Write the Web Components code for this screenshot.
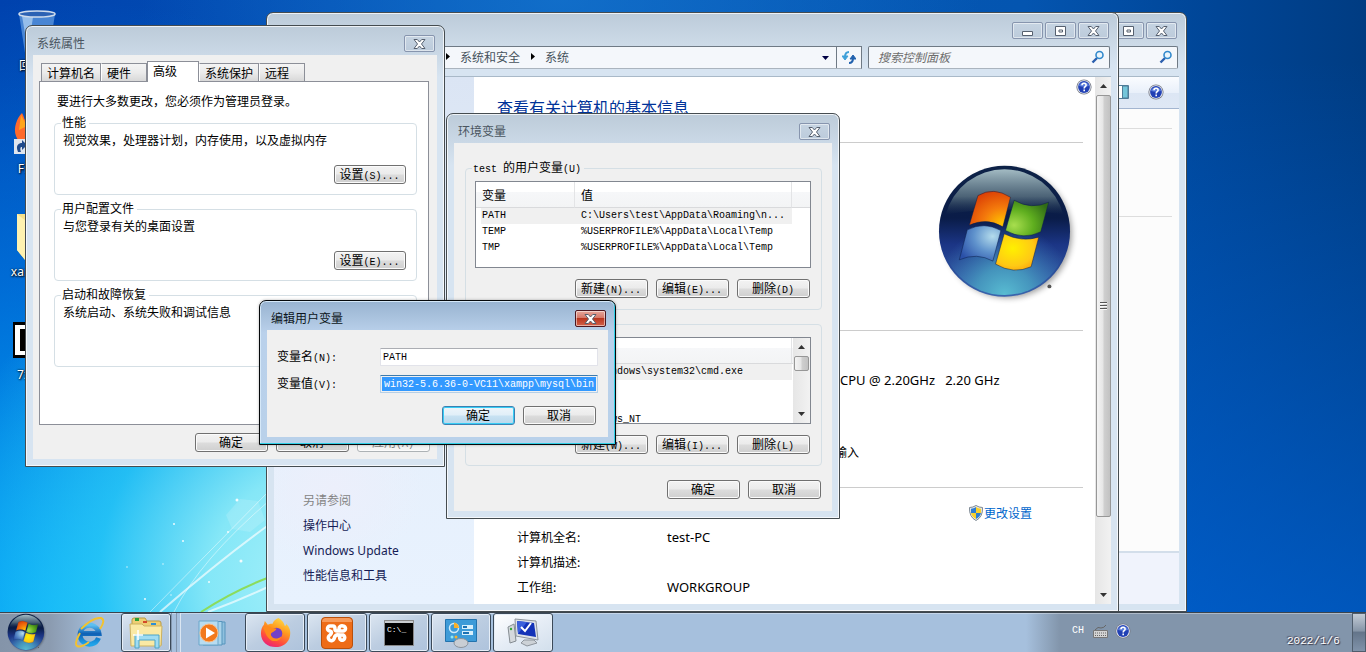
<!DOCTYPE html>
<html lang="zh-CN">
<head>
<meta charset="utf-8">
<title>桌面</title>
<style>
html,body{height:100%;margin:0}
body{font:12px/16px "Noto Sans","Noto Sans CJK SC",sans-serif;color:#000;overflow:hidden}
aero-window.computer{left:334px;top:12px;width:853px;height:600px}
aero-window.system{left:266px;top:12px;width:853px;height:600px}
aero-window.props{left:25px;top:25px;width:420px;height:442px}
aero-window.env{left:446px;top:113px;width:394px;height:406px}
aero-window.edit{left:259px;top:300px;width:357px;height:145px}
</style>
</head>
<body>
<win-desktop>
  <desk-icon slot="icons" kind="bin">回收站</desk-icon>
  <desk-icon slot="icons" kind="firefox">Firefox</desk-icon>
  <desk-icon slot="icons" kind="folder">xampp-w</desk-icon>
  <desk-icon slot="icons" kind="zip">7z1900</desk-icon>
  <aero-window class="computer" controls="min max close"><computer-page></computer-page></aero-window>
  <aero-window class="system" controls="min max close"><system-page></system-page></aero-window>
  <aero-window class="props" caption="系统属性" controls="close"><props-page></props-page></aero-window>
  <aero-window class="env" caption="环境变量" controls="close"><env-page></env-page></aero-window>
  <aero-window class="edit" caption="编辑用户变量" controls="close" active><edit-page></edit-page></aero-window>
  <task-bar slot="bar"></task-bar>
</win-desktop>

<script>
/* Registers an element whose shadow root is filled by render(host). */
function define(name, render) {
  customElements.define(name, class extends HTMLElement {
    connectedCallback() {
      if (this.shadowRoot) return;
      const t = document.createElement('template');
      t.innerHTML = render(this);
      this.attachShadow({mode: 'open'}).append(t.content.cloneNode(true));
    }
  });
}
const UI = '"Noto Sans","Noto Sans CJK SC",sans-serif';
const CJK = '"Noto Sans CJK SC","Noto Sans",sans-serif';
/* Dialog text: full-width characters at 12px, half-width ones on a 6px grid. */
const mix = s => s.replace(/[\x20-\x7e]+/g, m => `<span class="half">${m}</span>`);
const dialogText = `*{box-sizing:border-box}.half{font:10px/16px "Liberation Mono",monospace;white-space:pre}`;

const flag = `
  <path d="M443 583Q490 555 541 588L518 677Q470 648 417 672Z" fill="url(#r)"/>
  <path d="M552 597Q603 627 656 603L632 692Q580 718 526 688Z" fill="url(#g)"/>
  <path d="M411 686Q462 660 512 688L488 780Q440 753 387 776Z" fill="url(#b)"/>
  <path d="M522 698Q575 724 626 708L603 797Q550 821 496 789Z" fill="url(#y)"/>`;
const orb = size => `<svg width="${size}" height="${size}" viewBox="320 485 430 430" aria-hidden="true">
  <defs>
    <radialGradient id="r" cx=".8" cy=".9" r="1"><stop offset="0" stop-color="#ffc400"/><stop offset=".45" stop-color="#f47a0c"/><stop offset="1" stop-color="#d93a05"/></radialGradient>
    <radialGradient id="g" cx=".2" cy=".7" r=".9"><stop offset="0" stop-color="#a8de4e"/><stop offset=".5" stop-color="#5fae1f"/><stop offset="1" stop-color="#2f6a16"/></radialGradient>
    <radialGradient id="b" cx=".8" cy=".3" r=".9"><stop offset="0" stop-color="#b4dcec"/><stop offset=".5" stop-color="#5f92cc"/><stop offset="1" stop-color="#2a50a8"/></radialGradient>
    <radialGradient id="y" cx=".4" cy=".4" r=".8"><stop offset="0" stop-color="#fff000"/><stop offset=".6" stop-color="#ffc915"/><stop offset="1" stop-color="#fb8d05"/></radialGradient>
    <linearGradient id="o" x2="0" y2="1"><stop offset="0" stop-color="#0d2247"/><stop offset=".4" stop-color="#0a1c48"/><stop offset=".6" stop-color="#1b3585"/><stop offset="1" stop-color="#3a66ae"/></linearGradient>
    <radialGradient id="c" cx=".5" cy="1" r=".55"><stop offset="0" stop-color="#59bdd2"/><stop offset=".4" stop-color="#4aa4c4" stop-opacity=".8"/><stop offset="1" stop-color="#3f7fc0" stop-opacity="0"/></radialGradient>
    <linearGradient id="s" x2="0" y2="1"><stop offset="0" stop-color="#a4bcc4"/><stop offset=".6" stop-color="#5d7583" stop-opacity=".8"/><stop offset="1" stop-color="#33495c" stop-opacity="0"/></linearGradient>
    <filter id="f" x="-20%" y="-20%" width="140%" height="140%"><feGaussianBlur stdDeviation="9"/></filter>
  </defs>
  <circle cx="533" cy="698" r="192" fill="#000" opacity=".4" filter="url(#f)"/>
  <circle cx="523" cy="690" r="197" fill="url(#o)"/>
  <circle cx="523" cy="690" r="192" fill="url(#c)"/>
  <path d="M346 640A183 183 0 0 1 700 640Q523 610 346 640Z" fill="url(#s)"/>
  <g stroke="#0a1c48" stroke-width="3" stroke-opacity=".5">${flag}</g>
  <circle cx="658" cy="856" r="6" fill="#555"/>
</svg>`;
const help = size => `<svg width="${size}" height="${size}" viewBox="0 0 16 16" aria-hidden="true"><circle cx="8" cy="8" r="7.6" fill="#777b86"/><circle cx="8" cy="8" r="6.8" fill="#e4e8f2"/><circle cx="8" cy="8" r="5.9" fill="#2140b4"/><path d="M3 7a5.2 5.2 0 0 1 10 0Q8 8.500 3 7Z" fill="#5c7fdd"/><path d="M6 6.300C6 3.500 10.200 3.600 10.100 6.200 10 7.700 8.200 7.700 8.200 9.400M8.200 10.600V12.200" fill="none" stroke="#fff" stroke-width="1.600"/></svg>`;

define('win-desktop', () => `<style>
  :host{display:grid;grid-template-rows:minmax(0,1fr) 40px;height:100vh}
  .surface{position:relative;overflow:hidden;background:
    radial-gradient(ellipse 400px 380px at 330px 580px,rgba(172,242,250,1) 0%,rgba(140,236,248,.95) 30%,rgba(50,210,248,.7) 58%,rgba(0,170,248,0) 100%),
    radial-gradient(ellipse 640px 620px at 60px 620px,rgba(0,168,248,1),rgba(0,130,232,.6) 55%,rgba(0,100,215,0) 100%),
    radial-gradient(ellipse 420px 200px at 560px 0,rgba(20,115,205,.8),rgba(10,90,190,0)),
    linear-gradient(180deg,transparent 0 10%,rgba(0,104,225,.6)),
    linear-gradient(90deg,#0042ae 0%,#0558b8 40%,#0455b0 75%,#004698 88%,#003c82 100%)}
  .rays{position:absolute;left:0;bottom:0}
  .icons{position:absolute;left:0;top:4px;display:grid;grid-auto-rows:103px}
</style>
<div class="surface">
  <svg class="rays" width="280" height="152" viewBox="0 460 280 152" fill="none" aria-hidden="true">
    <path d="M150 612L270 490M174 612Q200 560 270 500" stroke="#fff" opacity=".45"/>
    <path d="M160 612Q220 560 270 524M208 612Q240 600 270 586" stroke="#fff" stroke-width="2" opacity=".65"/>
    <path d="M201 612Q235 590 270 577" stroke="#8bdc5c" stroke-width="2"/>
    <path d="M226 515L240 499 258 501 265 520 250 532 232 529Z" fill="#fff" opacity=".15"/>
    <g fill="#fff" opacity=".9"><circle cx="237" cy="500" r="1.500"/><circle cx="241" cy="561" r="1.500"/><circle cx="228" cy="532" r="1"/><circle cx="163" cy="564" r=".7"/><circle cx="183" cy="541" r="1"/><circle cx="174" cy="524" r="1"/><circle cx="145" cy="599" r="1"/><circle cx="209" cy="582" r="1"/><circle cx="171" cy="595" r=".7"/><circle cx="127" cy="567" r=".7"/></g>
  </svg>
  <div class="icons"><slot name="icons"></slot></div>
  <slot></slot>
</div>
<slot name="bar"></slot>`);

const deskArt = {
  bin: `<svg width="40" height="48" viewBox="0 0 40 48" aria-hidden="true"><path d="M2 7L8 46H32L38 7Z" fill="#5a95dc" opacity=".8"/><path d="M5 9L11 44 16 10Z" fill="#b8d6f4" opacity=".7"/><ellipse cx="20" cy="7" rx="18" ry="3" fill="#2c62b4" stroke="#cfdcec" stroke-width="1.500"/></svg>`,
  firefox: `<svg width="48" height="48" viewBox="0 0 48 48" aria-hidden="true"><path d="M9 3C11 6 11 9 12 10 24 0 44 8 44 26 44 42 10 46 3 26 0 18 4 8 9 3Z" fill="#ff6a2c"/><path d="M8 5L14 16 6 20Z" fill="#ffa51c"/><path d="M1 29H14V44H1Z" fill="#dfe5ee"/><path d="M5 42C2 35 6 33 9 33V30L14 35 9 40V37C7 37 7 39 8 42Z" fill="#1f4a8c"/></svg>`,
  folder: `<svg width="48" height="50" viewBox="0 0 48 50" aria-hidden="true"><path d="M4 2H30V38L12 48 4 38Z" fill="#f6e08a"/><path d="M4 2L13 9V49L4 38Z" fill="#fff2b0"/></svg>`,
  zip: `<svg width="48" height="40" viewBox="0 0 48 40" aria-hidden="true"><path d="M0 2H48V38H0Z" fill="#000"/><path d="M2 5H45V35H2Z" fill="#fff"/><path d="M7 9H40V31H7Z" fill="#000"/></svg>`
};
define('desk-icon', h => `<style>
  :host{display:flex;flex-direction:column;align-items:center;width:74px;height:103px;color:#fff;font:12px/18px ${UI};text-shadow:1px 1px 2px #000,0 0 2px #000}
  .art{height:53px;display:grid;place-items:center}
  .name{white-space:nowrap}
</style><div class="art">${deskArt[h.getAttribute('kind')]}</div><div class="name"><slot></slot></div>`);

const glyph = {
  min: '<path d="M3.500 7.500H13.500V11.500H3.500Z"/>',
  max: '<path d="M3.500 2.500H13.500V11.500H3.500Z"/><path d="M7 6H10.500V8H7Z"/>',
  close: '<path d="M3 2.500H6.300L8.500 5 10.700 2.500H14L10.500 7 14 11.500H10.700L8.500 9 6.300 11.500H3L6.500 7Z"/>'
};
const label = {min: '最小化', max: '最大化', close: '关闭'};
define('aero-window', h => `<style>
  :host{position:absolute;box-sizing:border-box;display:flex;flex-direction:column;border:1px solid #454c50;border-radius:7px 7px 0 0;padding:0 7px 7px;background:linear-gradient(#bccbd9,#d7e4f1 52px);box-shadow:inset 0 0 0 1px rgba(255,255,255,.75)}
  :host([active]){border-color:#05080a;background:linear-gradient(#98b3d0,#bad1eb 32px,#b9d1ea 100%);box-shadow:inset -1px -1px 0 #2fd0e6,inset 0 0 0 1px #d5e8f8,0 0 3px rgba(0,0,0,.3)}
  .title{flex:none;display:flex;align-items:flex-start;justify-content:space-between;height:29px;padding:9px 2px 0 4px;box-sizing:border-box;color:#4a5560;font:12px/16px ${CJK}}
  :host([active]) .title{color:#0c1520}
  :host(:not([caption])) .title{height:33px}
  .controls{display:flex;gap:2px}
  button{width:31px;height:17px;padding:0;display:grid;place-items:center;border:1px solid #8795ae;border-radius:2px;background:linear-gradient(#c6d4e2,#bccbdb);box-shadow:inset 0 0 0 1px rgba(255,255,255,.5)}
  svg{fill:#fff;stroke:#56606f}
  :host([active]) button{border-color:#4c1720;background:linear-gradient(#e6a79b,#d47566 48%,#b9361f 50%,#d3614a)}
  ::slotted(*){flex:1;min-height:0}
</style>
<div class="title"><span>${h.getAttribute('caption') || ''}</span><div class="controls">${h.getAttribute('controls').split(' ').map(c =>
  `<button aria-label="${label[c]}"><svg width="17" height="14" viewBox="0 0 17 14">${glyph[c]}</svg></button>`).join('')}</div></div>
<slot></slot>`);

define('win-button', h => `<style>${dialogText}
  :host{display:block;width:73px;flex:none}
  button{display:block;width:100%;height:19px;padding:0 1px 2px 0;border:1px solid #707070;border-radius:3px;background:linear-gradient(#f3f3f3,#ebebeb 48%,#dcdcdc 52%,#cfcfcf);box-shadow:inset 0 0 0 1px #fbfbfb;font:12px/15px ${CJK};color:#000;white-space:nowrap}
  .half{line-height:15px}
  :host([default]) button{border-color:#3c7fb1;background:linear-gradient(#eef5fa,#e0eff8 48%,#c8e2f2 52%,#b8d8ec);box-shadow:inset 0 0 0 1px #37cdf5}
  button:disabled{border-color:#adb2b5;background:#f4f4f4;color:#838383}
</style><button ${h.hasAttribute('disabled') ? 'disabled' : ''}>${mix(h.getAttribute('label'))}</button>`);

define('group-box', h => `<style>${dialogText}
  :host{display:block}
  fieldset{height:100%;margin:0;padding:0 10px 0 9px;min-width:0;border:1px solid #d5dfe5;border-radius:4px;font:12px/16px ${CJK}}
  legend{padding:0 3px 0 1px;margin-left:-3px;height:16px;line-height:14px}
  legend .half{line-height:14px}
</style><fieldset><legend>${mix(h.getAttribute('legend') || '')}</legend><slot></slot></fieldset>`);

define('props-page', () => `<style>${dialogText}
  :host{display:block;background:#f0f0f0;padding:6px 8px 0 6px;font:12px/16px ${CJK}}
  .tabs{display:flex;align-items:flex-end;height:20px;padding-left:2px}
  .tabs button{height:18px;padding:0;padding-left:5px;border:1px solid #8c8f98;border-width:1px 1px 0;border-left-color:#fff;text-align:left;white-space:nowrap;background:linear-gradient(#f4f4f4,#ebebeb 50%,#d8d8d8);font:12px/16px ${CJK};color:#000}
  .tabs button:first-child{border-left-color:#8c8f98}
  .w46{width:46px}.w60{width:60px}.w52{width:52px}
  .tabs button[aria-selected=true]{position:relative;height:21px;margin-bottom:-1px;padding-bottom:3px;background:#fff;border-left-color:#8c8f98}
  .panel{height:344px;border:1px solid #8c8f98;background:#fff;padding:11px 11px 0 14px}
  p{margin:0}
  .lead{padding-left:3px}
  group-box{height:80px;margin-top:6px}
  .desc{padding-top:1px;margin-left:-1px}
  group-box win-button{width:72px;margin:17px 0 0 auto}
  .foot{display:flex;justify-content:flex-end;gap:8px;padding-top:8px;margin-right:-1px}
</style>
<div class="tabs" role="tablist">
  <button class="w60" role="tab">计算机名</button><button class="w46" role="tab">硬件</button><button class="w52" role="tab" aria-selected="true">高级</button><button class="w60" role="tab">系统保护</button><button class="w46" role="tab">远程</button>
</div>
<div class="panel" role="tabpanel">
  <p class="lead">要进行大多数更改，您必须作为管理员登录。</p>
  <group-box legend="性能"><p class="desc">视觉效果，处理器计划，内存使用，以及虚拟内存</p><win-button label="设置(S)..."></win-button></group-box>
  <group-box legend="用户配置文件"><p class="desc">与您登录有关的桌面设置</p><win-button label="设置(E)..."></win-button></group-box>
  <group-box legend="启动和故障恢复"><p class="desc">系统启动、系统失败和调试信息</p></group-box>
</div>
<div class="foot"><win-button label="确定"></win-button><win-button label="取消"></win-button><win-button disabled label="应用(A)"></win-button></div>`);

define('scroll-bar', () => `<style>
  :host{display:flex;flex-direction:column;align-items:center;width:17px;box-sizing:border-box;background:linear-gradient(90deg,#e6e6e6,#f2f2f2)}
  .end{flex:none;height:18px;display:grid;place-items:center}
  .thumb{flex:none;width:15px;height:var(--thumb,15px);box-sizing:border-box;border:1px solid #979797;border-radius:2px;background:linear-gradient(90deg,#f4f4f4,#e6e6e6 45%,#cfcfcf 55%,#c2c2c2);display:grid;place-items:center}
  .grip{display:var(--grip,none);width:7px;height:9px;background:repeating-linear-gradient(#555 0 1px,#f8f8f8 1px 2px,transparent 2px 3px)}
  .space{flex:1}
</style>
<div class="end"><svg width="7" height="4"><path d="M0 4L3.500 0 7 4Z" fill="#333"/></svg></div>
<div class="thumb"><div class="grip"></div></div><div class="space"></div>
<div class="end"><svg width="7" height="4"><path d="M0 0L3.500 4 7 0Z" fill="#333"/></svg></div>`);

define('variable-list', h => `<style>${dialogText}
  :host{display:flex;height:87px;margin:5px 0 11px;border:1px solid #828790;background:#fff;overflow:hidden;box-sizing:border-box}
  .view{flex:1;overflow:hidden}
  table{width:100%;table-layout:fixed;border-collapse:separate;border-spacing:0}
  col.name{width:99px}col.value{width:217px}
  th{height:26px;padding:0 0 0 6px;text-align:left;font:12px/16px ${CJK};background:linear-gradient(#fff 40%,#f6f7f9 40%,#f3f4f5);border-bottom:1px solid #d9dadc;border-right:1px solid #e3e4e6}
  th:last-child{border-right:0}
  td{height:16px;padding:0 0 0 6px;white-space:nowrap;background-clip:padding-box}
  td:first-child{border-left:5px solid transparent;padding-left:1px}
  tr.on td:not(:last-child){background-color:#f0f0f0}
  .half{line-height:16px;display:block}
</style>
<div class="view"><table><colgroup><col class="name"><col class="value"><col></colgroup>
<thead><tr>${h.getAttribute('heads').split('|').map(t => `<th>${t}</th>`).join('')}</tr></thead>
<tbody>${h.getAttribute('rows').split('|').map((r, i) => {
  const [a, b] = r.split('=');
  return `<tr${i ? '' : ' class="on"'}><td>${mix(a)}</td><td>${mix(b)}</td><td></td></tr>`;
}).join('')}</tbody></table></div>${h.hasAttribute('scroll') ? '<scroll-bar></scroll-bar>' : ''}`);

define('env-page', () => `<style>${dialogText}
  :host{display:block;background:#f0f0f0;padding:17px 10px 0 11px}
  group-box{height:150px;margin-bottom:6px}
  .row{display:flex;justify-content:flex-end;gap:8px;padding-right:1px}
  .foot{padding-top:8px}
</style>
<group-box legend="test 的用户变量(U)">
  <variable-list heads="变量|值|" rows="PATH=C:\\Users\\test\\AppData\\Roaming\\n...|TEMP=%USERPROFILE%\\AppData\\Local\\Temp|TMP=%USERPROFILE%\\AppData\\Local\\Temp"></variable-list>
  <div class="row"><win-button label="新建(N)..."></win-button><win-button label="编辑(E)..."></win-button><win-button label="删除(D)"></win-button></div>
</group-box>
<group-box>
  <variable-list scroll heads="||" rows="=C:\\Windows\\system32\\cmd.exe|=|=|=Windows_NT"></variable-list>
  <div class="row"><win-button label="新建(W)..."></win-button><win-button label="编辑(I)..."></win-button><win-button label="删除(L)"></win-button></div>
</group-box>
<div class="row foot"><win-button label="确定"></win-button><win-button label="取消"></win-button></div>`);

define('text-field', h => `<style>${dialogText}
  :host{display:flex;height:18px;align-items:center;font:12px/16px ${CJK}}
  label{width:103px;flex:none}
  input{flex:1;min-width:0;height:18px;padding:1px 1px 1px 2px;border:1px solid #e2e3ea;border-top-color:#abadb3;border-radius:1px;background:#fff;font:10px/14px "Liberation Mono",monospace;color:#000;outline:0}
  :host([selected]) input{border-color:#b5cfe7;border-top-color:#3d7bad;background:#fff linear-gradient(#39f,#39f) content-box;color:#fff;padding-left:1px;text-indent:2px}
</style><label for="f">${mix(h.getAttribute('label'))}</label><input id="f" type="text" value="${h.getAttribute('value')}">`);

define('edit-page', () => `<style>
  :host{display:flex;flex-direction:column;gap:9px;background:#f0f0f0;padding:18px 10px 0}
  .row{display:flex;justify-content:flex-end;gap:8px;padding:4px 2px 0 0}
</style>
<text-field label="变量名(N):" value="PATH"></text-field>
<text-field selected label="变量值(V):" value="win32-5.6.36-0-VC11\\xampp\\mysql\\bin"></text-field>
<div class="row"><win-button default label="确定"></win-button><win-button label="取消"></win-button></div>`);

define('search-box', h => `<style>
  :host{display:flex;align-items:center;box-sizing:border-box;height:23px;border:1px solid #6f7a85;border-bottom-color:#aab4be;border-radius:2px;background:#f4f7fb;padding:0 4px 1px 9px}
  input{flex:1;min-width:0;border:0;padding:0;background:none;font:italic 12px/16px ${CJK};outline:0}
  input::placeholder{color:#6d6d6d}
</style><input type="search" aria-label="搜索" placeholder="${h.getAttribute('hint') || ''}">
<svg width="14" height="14" viewBox="0 0 14 14" fill="none" aria-hidden="true"><path d="M1.500 12.500L6 8" stroke="#2b5fae" stroke-width="2.400"/><circle cx="8.500" cy="5" r="3.500" stroke="#3289cc" stroke-width="1.600" fill="#eaf5fc"/></svg>`);

define('computer-page', () => `<style>
  *{box-sizing:border-box}
  :host{display:flex;flex-direction:column}
  search-box{width:242px;margin:0 1px 7px auto}
  .bar{height:33px;border-top:1px solid #a9b9c8;border-bottom:1px solid #a3b5d0;background:linear-gradient(#fafcff,#e9f0fa 50%,#dce6f4 52%,#dfe8f5);display:flex;justify-content:flex-end;align-items:center;gap:19px;padding:0 15px 2px 0}
  .body{flex:1;background:#fcfcfc;padding:19px 7px 0 200px}
  hr{margin:0 0 87px;border:0;border-top:1px solid #ddd}
  .status{height:53px;background:#f0f3fc;border-top:2px solid #d3deea}
</style>
<search-box></search-box>
<div class="bar"><svg width="17" height="14" aria-hidden="true"><path d="M1 .500H16.500V13.500H1Z" fill="#fff" stroke="#4f7d98"/><path d="M10.500 1H16V13H10.500Z" fill="#74c6da" stroke="#4f7d98"/></svg>${help(16)}</div>
<div class="body"><hr><hr></div><div class="status"></div>`);

define('system-page', () => `<style>
  *{box-sizing:border-box}
  :host{display:flex;flex-direction:column;color:#000;font:12px/16px ${UI}}
  .nav{display:flex;gap:6px;height:30px;padding-right:1px}
  .address{flex:1;display:flex;align-items:center;height:23px;margin-left:60px;border:1px solid #6f7a85;border-bottom-color:#aab4be;background:#f4f7fb;color:#46525c;font:12px/16px ${CJK}}
  .crumb{display:flex;align-items:center;gap:10px;padding-bottom:2px}
  .crumb:first-child{margin-left:111px}
  .crumb+.crumb{margin-left:11px}
  .drop{margin:0 7px 0 auto}
  .refresh{width:25px;height:21px;padding:0;border:0;border-left:1px solid #6f7a85;background:none;display:grid;place-items:center}
  search-box{width:242px}
  .content{flex:1;min-height:0;display:flex;border-top:1px solid #a9b9c8;background:#fff}
  aside{width:200px;background:radial-gradient(ellipse 90px 80px at 30% 78%,#eceffb,transparent),linear-gradient(#dbe5f4,#e6effb 60%,#e8f2fe);padding:415px 0 0 29px;font-size:12px;line-height:18px}
  aside span,aside a{display:block;margin-bottom:7px;color:#151c55;text-decoration:none}
  aside span{color:#848484}
  main{flex:1;padding:17px 12px 0 23px;overflow:hidden}
  .top{display:flex;justify-content:space-between;align-items:flex-start}
  .top svg{margin:-15px -9px 0 0}
  h1{margin:0;font:16px/26px ${CJK};color:#039}
  hr{margin:8px 0;border:0;border-top:1px solid #ccc;height:2px}
  .intro{margin-top:22px}
  .edition{height:170px;padding:11px 3px 0 0;display:flex;justify-content:flex-end}
  dl{margin:0;padding-left:20px;display:grid;grid-template-columns:150px 1fr;line-height:24px}
  dt{font:12px/23px ${CJK}}
  dd{margin:0;font-size:13px;white-space:nowrap}
  .spec{height:139px;padding:28px 0 0 20px;grid-auto-rows:24px}
  .cpu{padding-left:173px}
  .touch{grid-column:2;grid-row:4;padding-left:168px;font:12px/24px ${CJK}}
  .cpu{grid-column:2;grid-row:1}
  .names{padding-top:3px;grid-auto-rows:25px;line-height:25px}
  .names dd{grid-column:2}
  .names .link{display:flex;padding-left:302px}
  a.change{display:flex;align-items:center;gap:1px;color:#0066cc;text-decoration:none;font:12px/24px ${CJK}}
  scroll-bar{width:16px;--thumb:422px;--grip:block}
</style>
<div class="nav">
  <div class="address"><span class="crumb"><svg width="4" height="7"><path d="M0 0L4 3.500 0 7Z"/></svg>系统和安全</span><span class="crumb"><svg width="4" height="7"><path d="M0 0L4 3.500 0 7Z"/></svg>系统</span>
    <svg class="drop" width="7" height="4"><path d="M0 0H7L3.500 4Z" fill="#004"/></svg>
    <button class="refresh" aria-label="刷新"><svg width="14" height="13" viewBox="0 0 14 13" fill="none" stroke-width="2"><path d="M7 1Q3 1 3 6" stroke="#3fa0d8"/><path d="M0 5H6L3 9Z" fill="#3fa0d8" stroke="#3fa0d8" stroke-width="1"/><path d="M7 12Q11 12 11 7" stroke="#2262ae"/><path d="M8 8H14L11 4Z" fill="#2262ae" stroke="#2262ae" stroke-width="1"/></svg></button></div>
  <search-box hint="搜索控制面板"></search-box>
</div>
<div class="content">
  <aside><span>另请参阅</span><a href="#">操作中心</a><a href="#">Windows Update</a><a href="#">性能信息和工具</a></aside>
  <main>
    <div class="top"><h1>查看有关计算机的基本信息</h1>${help(16)}</div>
    <hr class="intro">
    <div class="edition">${orb(143)}</div>
    <hr>
    <dl class="spec"><dd class="cpu">CPU @ 2.20GHz &nbsp; 2.20 GHz</dd><dd class="touch">输入</dd></dl>
    <hr>
    <dl class="names"><dd class="link"><a class="change" href="#"><svg width="14" height="16" viewBox="0 0 14 16" aria-hidden="true"><path d="M7 .500Q10 2.500 13.500 2.500 14 12 7 15.500 0 12 .500 2.500 4 2.500 7 .500Z" fill="#eee" stroke="#7b8792"/><path d="M7 2Q4.500 3.700 2 3.800V8H7Z" fill="#2d7dd2"/><path d="M7 2Q9.500 3.700 12 3.800V8H7Z" fill="#f7d02c"/><path d="M2 8H7V14Q2.500 11.500 2 8Z" fill="#f7d02c"/><path d="M7 8H12Q11.500 11.500 7 14Z" fill="#2d7dd2"/></svg>更改设置</a></dd>
    <dt>计算机全名:</dt><dd>test-PC</dd><dt>计算机描述:</dt><dd></dd><dt>工作组:</dt><dd>WORKGROUP</dd></dl>
  </main>
  <scroll-bar></scroll-bar>
</div>`);

const art = {
  ie: `<svg width="32" height="32" viewBox="0 0 32 32" fill="none" aria-hidden="true"><defs><linearGradient id="i" x2="0" y2="1"><stop offset="0" stop-color="#5cc0f2"/><stop offset=".45" stop-color="#0f5fb4"/><stop offset="1" stop-color="#1fa4ea"/></linearGradient></defs><path d="M25.500 21A9.500 9.500 0 1 1 26 16.500H8" stroke="url(#i)" stroke-width="5"/><path d="M7 16Q1 27 4 29 8 31 16 25M8 12Q20 0 28 1 33 3 27 12" stroke="#f2c230" stroke-width="2"/></svg>`,
  explorer: `<svg width="34" height="32" viewBox="0 0 34 32" aria-hidden="true"><path d="M3 3Q3 1 5 1H16L18 4H30Q32 4 32 6V28H3Z" fill="#eecf74" stroke="#b99a45"/><path d="M6 1H10V4H6Z" fill="#2b9f35"/><path d="M14 4H18V6H14Z" fill="#d34a28"/><path d="M22 6H27V8H22Z" fill="#2b8ed6"/><path d="M1 7H13L15 9H33L32 29H2Z" fill="#fae9a4" stroke="#cdb260"/><path d="M6 18H30V31H26V23H10V31H6Z" fill="#9fdcf2" stroke="#4ca4c8"/><path d="M9 13V23M4 18H14" stroke="#fff" stroke-width="1.500"/></svg>`,
  wmp: `<svg width="30" height="26" viewBox="0 0 30 26" aria-hidden="true"><path d="M8 2H27V24H8Z" fill="#8fc0de" stroke="#5795bd"/><path d="M5 1.500H24V25H5Z" fill="#a9d3ea" stroke="#5795bd"/><path d="M1 1H20V25H1Z" fill="#b8dcf0" stroke="#6ba7ca"/><circle cx="11" cy="13" r="9" fill="#f2791c" stroke="#fbc08a"/><path d="M8 7.500L17 13 8 18.500Z" fill="#fff"/></svg>`,
  firefox: `<svg width="31" height="31" viewBox="0 0 32 32" aria-hidden="true">
  <defs><linearGradient id="fx" x1=".8" x2=".3" y2="1"><stop offset="0" stop-color="#ffe14a"/><stop offset=".4" stop-color="#ff9a1f"/><stop offset=".75" stop-color="#ff4a3f"/><stop offset="1" stop-color="#e8207c"/></linearGradient></defs>
  <path d="M19 1C24 4 25 7 25.500 9 27 9.500 27 8 27 7 30 10 32 14 31 19 30 27 23 31 16 31 8 31 1 26 1 17 1 13 2 10 4 8L5 4 8 8C10 7 12 7 13 7 14 4 16 2 19 1Z" fill="url(#fx)"/>
  <circle cx="17" cy="17" r="6" fill="#7540c8"/><path d="M3 11C5 9 9 9 12 11L17 12C16 15 12 15 11 18 12 22 17 24 22 20 21 25 13 27 9 22 6 19 5 14 3 11Z" fill="#ff8a1c"/></svg>`,
  xampp: `<svg width="32" height="32" viewBox="0 0 32 32" aria-hidden="true"><path d="M4 .500H28Q31.500 .500 31.500 4V28Q31.500 31.500 28 31.500H4Q.500 31.500 .500 28V4Q.500 .500 4 .500Z" fill="#ee6c18" stroke="#b9500c"/><path d="M4 1H28Q31 2 31 5H1Q1 2 4 1Z" fill="#f79a5a"/><path d="M9 9H12Q14 9 14 12 14 14 16 14H19M9 9A2.500 2.500 0 0 0 9 14Q12 15 9 18A3 3 0 1 0 13 22Q14 17 18 18M22 9A3 3 0 0 0 18 12V14H22A2.500 2.500 0 0 0 22 9M19 18H22A2.500 2.500 0 1 1 20 23Q18 22 19 18" fill="none" stroke="#fff" stroke-width="3.600" stroke-linecap="round" stroke-linejoin="round"/></svg>`,
  cmd: `<svg width="30" height="26" viewBox="0 0 30 26" aria-hidden="true"><path d="M.500 .500H29.500V25.500H.500Z" fill="#000" stroke="#888"/><path d="M1 1H29V3H1Z" fill="#c8ccd0"/><text x="3" y="12" fill="#fff" font-family="Liberation Mono,monospace" font-size="8">C:\\_</text></svg>`,
  panel: `<svg width="32" height="30" viewBox="0 0 32 30" aria-hidden="true"><path d="M.500 1.500H31.500V23.500H.500Z" fill="#3d9bd8" stroke="#2373ad"/><circle cx="9" cy="10" r="4.500" fill="none" stroke="#cfeafa" stroke-width="1.500"/><path d="M9 10V4.500A5.500 5.500 0 0 1 14 10Z" fill="#f8b02c"/><path d="M17 7H28V11H17ZM17 13H28V17H17Z" fill="#d8f0fc"/><path d="M18 8H22V10H18ZM18 14H24V16H18Z" fill="#1b72b4"/><circle cx="7" cy="19" r="1.500" fill="#8de8f8"/><circle cx="11" cy="19" r="1.500" fill="#f8b02c"/><ellipse cx="16" cy="25" rx="7" ry="4.500" fill="#c9ced4" stroke="#8c949c"/></svg>`,
  system: `<svg width="32" height="30" viewBox="0 0 32 30" aria-hidden="true"><path d="M1 9L7 6 9 23 3 25Z" fill="#d5d9dd" stroke="#858c92"/><circle cx="4" cy="11" r="1.200" fill="#3a3"/><path d="M8 1L29 3 31 22 9 18Z" fill="#dfe3e8" stroke="#8d949c"/><path d="M10 3L27 5 29 19 11 16Z" fill="#1433b8"/><path d="M10 3L20 4 11 16Z" fill="#3b60dc"/><path d="M14 9L18 13 24 5" fill="none" stroke="#fff" stroke-width="2"/><path d="M17 22L27 22 30 25 20 28 14 25Z" fill="#cdd2d7" stroke="#8d949c"/></svg>`
};
define('task-button', h => `<style>
  :host{display:block;width:60px;height:39px}
  button{width:100%;height:100%;padding:0;border:1px solid transparent;background:none;display:grid;place-items:center}
  :host([running]) button{border-color:#3b4958;border-radius:3px;box-shadow:inset 0 0 0 1px #e6eef7;background:linear-gradient(150deg,#dce6f1,#bccde1 50%,#aec3dc)}
  :host([front]) button{background:linear-gradient(150deg,#fff,#e6edf6 50%,#d2dfec)}
</style><button aria-label="${h.getAttribute('name')}">${art[h.getAttribute('kind')]}</button>`);

define('task-bar', () => `<style>
  *{box-sizing:border-box}
  :host{box-sizing:border-box;position:relative;display:flex;height:40px;border-top:1px solid #3b444d;background:linear-gradient(rgba(255,255,255,.35) 0 1px,transparent 1px),linear-gradient(90deg,#8494a9 0,#8b9bb0 50px,#a6c0dd 100px,#a6c0dd calc(100% - 340px),#8295ab calc(100% - 306px),#8295ab)}
  .start{width:54px;padding:0;border:0;background:none;display:grid;place-items:center}
  .apps{flex:1;display:flex;gap:2px;padding-left:5px}
  .stack{width:60px;display:flex}
  .stack task-button{width:52px}
  .stack::after{content:"";width:8px;border:1px solid #8497ae;border-width:0 1px;border-right-color:#dbe6f2;box-shadow:inset -3px 0 0 #a6c0dd,inset -4px 0 0 #8497ae}
  .tray{display:flex;align-items:center;height:36px;color:#fff;font:10px/16px "Liberation Mono",monospace}
  .kbd{margin:0 7px 0 9px}
  time{width:65px;margin:20px 0 0 156px;font-size:11px;text-shadow:1px 1px 1px #334,-1px -1px 1px #556}
  .show{width:14px;padding:0;border:1px solid #4f5d6c;background:linear-gradient(#c3ccd6,#8796a8 45%,#64758a 50%,#8093aa)}
</style>
<button class="start" aria-label="开始">${orb(40)}</button>
<div class="apps">
  <task-button kind="ie" name="Internet Explorer"></task-button>
  <span class="stack"><task-button running kind="explorer" name="资源管理器"></task-button></span>
  <task-button kind="wmp" name="媒体播放器"></task-button>
  <task-button running kind="firefox" name="Firefox"></task-button>
  <task-button running kind="xampp" name="XAMPP"></task-button>
  <task-button running kind="cmd" name="命令提示符"></task-button>
  <task-button running kind="panel" name="控制面板"></task-button>
  <task-button running front kind="system" name="系统属性"></task-button>
</div>
<div class="tray"><span>CH</span><svg class="kbd" width="15" height="13" viewBox="0 0 15 13" aria-hidden="true"><path d="M2 5Q5 1 8 3 11 3 13 0" fill="none" stroke="#666"/><path d="M.500 5.500H14.500V12.500H.500Z" fill="#d4d4d4" stroke="#777"/><path d="M2 8H13M2 10.500H13" stroke="#666" stroke-dasharray="1 1"/></svg>${help(16)}<time>2022/1/6</time></div>
<button class="show" aria-label="显示桌面"></button>`);
</script>
</body>
</html>
